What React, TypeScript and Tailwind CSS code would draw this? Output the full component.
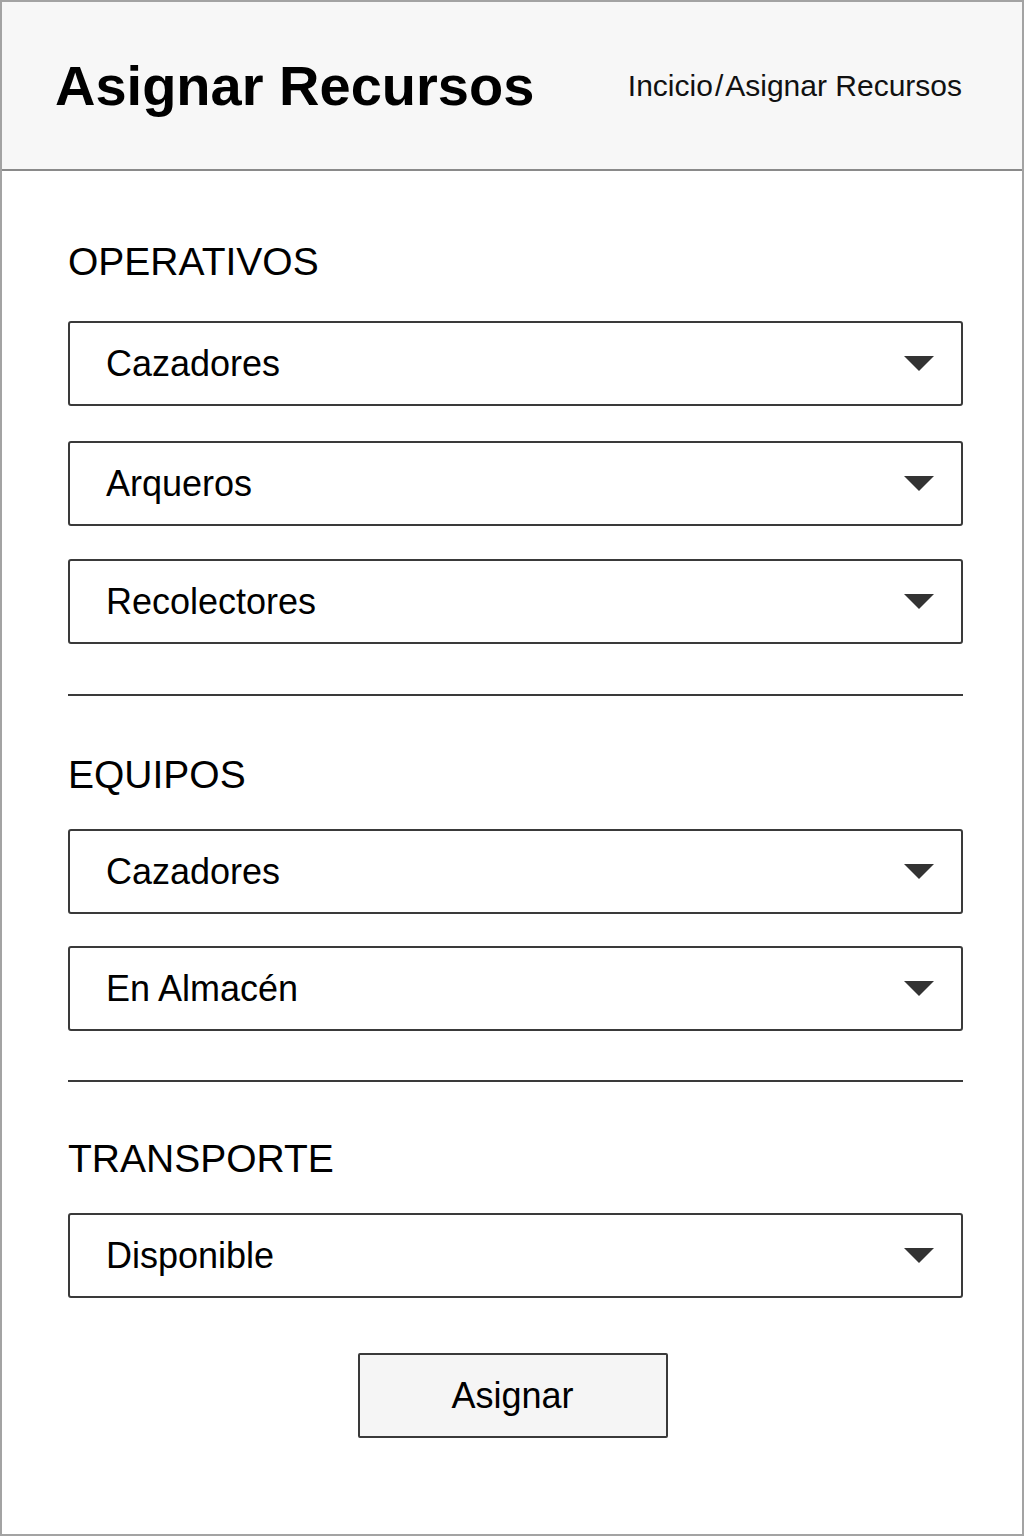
import React from "react";

const font = { fontFamily: '"Liberation Sans", Arial, sans-serif' };

function Caret() {
  return (
    <svg width="30" height="15" viewBox="0 0 30 15" className="shrink-0">
      <path d="M0 0 H30 L15 15 Z" fill="#333333" />
    </svg>
  );
}

function Select({ label, className = "" }: { label: string; className?: string }) {
  return (
    <div
      className={`flex h-[85px] w-[895px] items-center justify-between rounded-[3px] border-2 border-[#3a3a3a] bg-white pl-[36px] pr-[27px] ${className}`}
    >
      <span className="text-[36px] leading-none text-black">{label}</span>
      <Caret />
    </div>
  );
}

function Heading({ children, className = "" }: { children: React.ReactNode; className?: string }) {
  return <h2 className={`text-[39px] leading-none font-normal text-black ${className}`}>{children}</h2>;
}

function Divider({ className = "" }: { className?: string }) {
  return <div className={`h-[2px] w-[895px] bg-[#3a3a3a] ${className}`} />;
}

export default function App() {
  return (
    <div style={font} className="h-[1536px] w-[1024px] border-2 border-[#a3a3a3] bg-white">
      <header className="flex h-[169px] items-center justify-between border-b-2 border-[#8a8a8a] bg-[#f7f7f7] pl-[53px] pr-[60px]">
        <h1 className="text-[56px] leading-none font-bold text-black">Asignar Recursos</h1>
        <div className="text-[30px] leading-none text-[#111]">
          Incicio<span className="mx-[2px]">/</span>Asignar Recursos
        </div>
      </header>

      <main className="flex flex-col pl-[66px]">
        <Heading className="mt-[71px]">OPERATIVOS</Heading>
        <Select label="Cazadores" className="mt-[40px]" />
        <Select label="Arqueros" className="mt-[35px]" />
        <Select label="Recolectores" className="mt-[33px]" />
        <Divider className="mt-[50px]" />

        <Heading className="mt-[59px]">EQUIPOS</Heading>
        <Select label="Cazadores" className="mt-[35px]" />
        <Select label="En Almacén" className="mt-[32px]" />
        <Divider className="mt-[49px]" />

        <Heading className="mt-[57px]">TRANSPORTE</Heading>
        <Select label="Disponible" className="mt-[35px]" />

        <div className="mt-[55px] flex w-[895px] justify-center">
          <button className="-ml-[6px] h-[85px] w-[310px] rounded-[2px] border-2 border-[#3a3a3a] bg-[#f5f5f5] text-[36px] leading-none text-black">
            Asignar
          </button>
        </div>
      </main>
    </div>
  );
}
